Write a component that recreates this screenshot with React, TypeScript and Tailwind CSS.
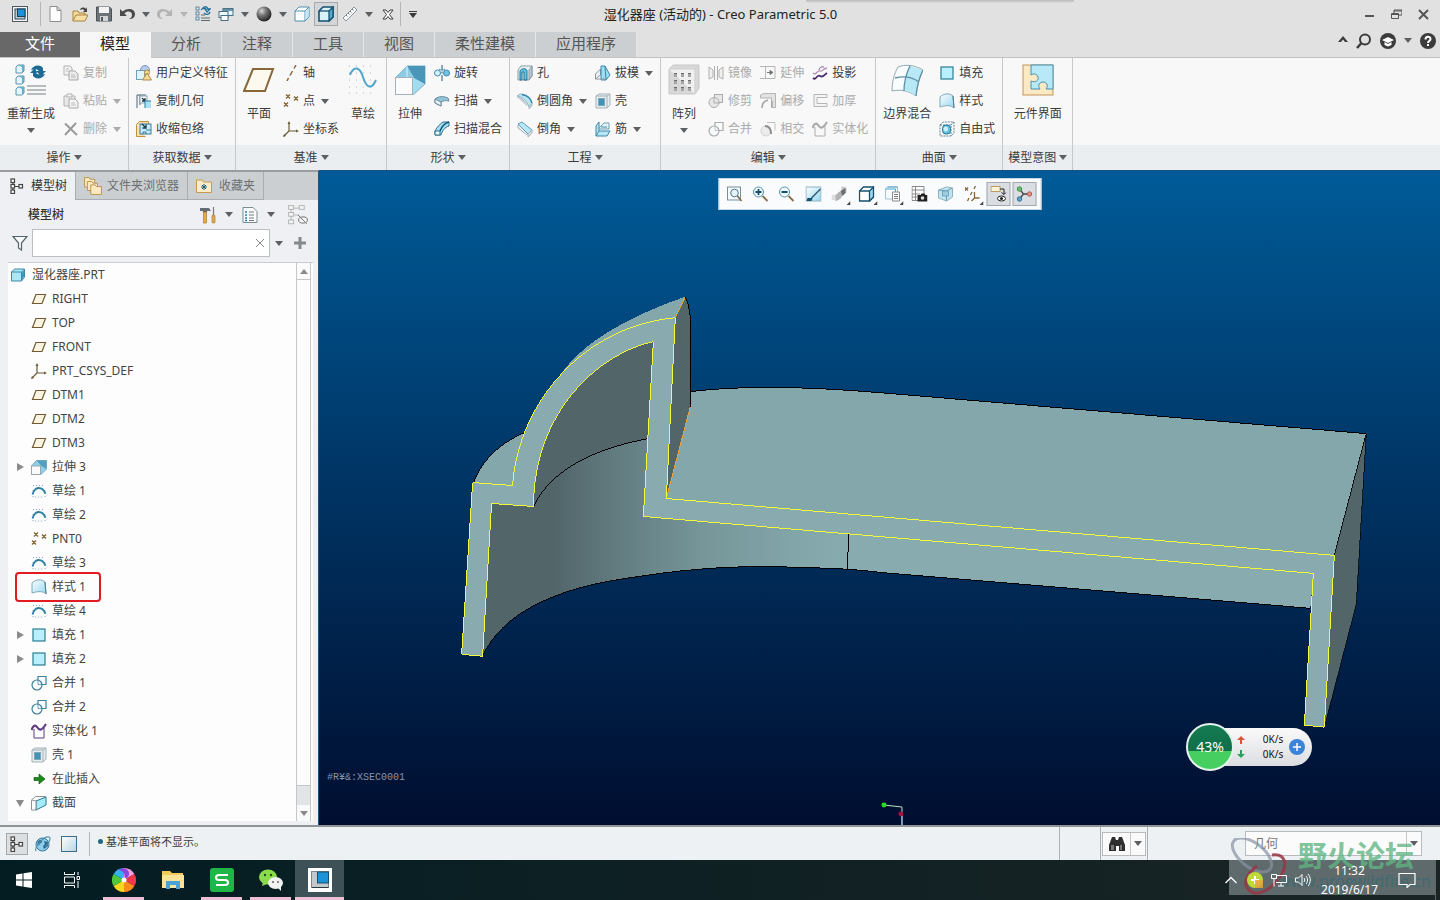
import type { ReactNode } from 'react'

const ICONS: Record<string, ReactNode> = {
  app: (
    <>
      <rect x="0.5" y="0.5" width="15" height="15" fill="#f4f4f4" stroke="#4f5b62" />
      <rect x="3" y="3" width="10" height="10" fill="#c3cace" stroke="#24475c" />
      <rect x="5.5" y="3" width="7.5" height="7.5" fill="#1c93d8" stroke="#173f57" />
    </>
  ),
  new: <path d="M2 0.5h7l4 4v11H2zM9 0.5v4h4" fill="#fdfdfd" stroke="#8d8d8d" />,
  open: (
    <>
      <path d="M1 15V5h5l1 2h6v3" fill="#f3dca4" stroke="#a8833c" />
      <path d="M1 15l3-6h12l-3 6z" fill="#f7e0a6" stroke="#a8833c" />
      <path d="M8 4c1-3 4-3 6-1l1-2v5h-4l1.5-1.5C11 3 10 3 8 4z" fill="#444" />
    </>
  ),
  save: (
    <>
      <path d="M0.5 1h13l2 2v12H0.5z" fill="#6b7278" stroke="#4b5157" />
      <rect x="3" y="1" width="10" height="6" fill="#f3f3f3" />
      <rect x="4" y="10" width="8" height="5" fill="#cfd4d8" />
      <rect x="5" y="11" width="2" height="4" fill="#555" />
    </>
  ),
  undo: <path d="M1 3v7h7L5.500 7.500C8 4.500 13 5 13 9c0 2-1 3-3 4 4 0 6-2 6-5 0-5-7-7-12.500-2.500z" fill="#4a4a4a" />,
  redo: <path d="M15 3v7H8l2.500-2.500C8 4.500 3 5 3 9c0 2 1 3 3 4-4 0-6-2-6-5 0-5 7-7 12.500-2.500z" fill="#b4b4b4" />,
  regenSmall: (
    <>
      <g fill="#d7eff8" stroke="#45718a" strokeWidth="0.8">
        <rect x="1" y="1" width="3" height="3" />
        <rect x="1" y="6" width="3" height="3" />
        <rect x="1" y="11" width="3" height="3" />
      </g>
      <path d="M6 9h4M6 12h9M6 14.5h9" stroke="#5c6a72" />
      <path d="M7 3c2-3 5-3 6 0h2l-3 3-2-3h1c-1-1-2-1-4 0zM15 6c-1 3-4 3-6 1" fill="none" stroke="#1f6f9c" strokeWidth="1.3" />
    </>
  ),
  windows: (
    <>
      <rect x="5" y="2.5" width="10" height="7" fill="#e6f5fb" stroke="#45718a" />
      <path d="M5 4h10" stroke="#45718a" strokeWidth="1.5" />
      <rect x="1" y="5.5" width="9" height="6" fill="#eef9fd" stroke="#45718a" />
      <rect x="3" y="9.5" width="7" height="5" fill="#fff" stroke="#45718a" />
    </>
  ),
  sphere: <circle cx="8" cy="8" r="7.5" fill="url(#ball)" />,
  cube: (
    <>
      <path d="M1 5l4-4h10v10l-4 4H1z" fill="#fff" stroke="#4d8fae" />
      <path d="M1 5h10v10M11 5l4-4" fill="none" stroke="#4d8fae" />
      <path d="M11.5 5.5L14.5 2v9l-3 3z" fill="#c7e8f4" />
    </>
  ),
  cubeBold: (
    <>
      <path d="M1 5l4-4h10v10l-4 4H1z" fill="#d9f2fa" stroke="#14506e" strokeWidth="1.6" />
      <path d="M11 5l4-4v10l-4 4z" fill="#54a9cc" stroke="#14506e" strokeWidth="1.3" />
      <path d="M1 5h10" stroke="#14506e" strokeWidth="1.3" />
    </>
  ),
  cubeOutline: (
    <>
      <path d="M1 5l4-4h10v10l-4 4H1z" fill="#fff" stroke="#14506e" strokeWidth="1.3" />
      <path d="M11 5l4-4v10l-4 4z" fill="#9fd6ea" stroke="#14506e" strokeWidth="1.3" />
      <path d="M1 5h10" stroke="#14506e" strokeWidth="1.3" />
    </>
  ),
  ruler: (
    <>
      <path d="M1 12L12 1l3 3L4 15z" fill="#fafafa" stroke="#8b9499" />
      <path d="M4 9l1.500 1.500M6 7l1.500 1.500M8 5l1.500 1.500M10 3l1.500 1.500" stroke="#5d7d90" />
    </>
  ),
  closeAll: <path d="M3 4h3l2 2.500L10 4h3l-3.500 4.500L13 13h-3l-2-2.500L6 13H3l3.500-4.500z" fill="#fff" stroke="#3b3b3b" />,
  copy: (
    <>
      <path d="M1 1h6l2 2v7H1z" fill="#f2f2f2" stroke="#b3b3b3" />
      <path d="M6 6h6l3 3v6H6z" fill="#eaeaea" stroke="#a9a9a9" />
      <path d="M8 10h4M8 12h5M3 4h3M3 6h2" stroke="#bcbcbc" />
    </>
  ),
  paste: (
    <>
      <path d="M1 3h11v10H1z" fill="#e8e8e8" stroke="#b3b3b3" />
      <path d="M4 1h5v3H4z" fill="#f5f5f5" stroke="#b3b3b3" />
      <path d="M6 6h6l3 3v6H6z" fill="#f4f4f4" stroke="#a9a9a9" />
      <path d="M8 10h4M8 12h5" stroke="#bcbcbc" />
    </>
  ),
  delete: <path d="M2 2.500L14 14M13 2L2 14" stroke="#9a9a9a" strokeWidth="2" />,
  udf: (
    <>
      <circle cx="9" cy="5" r="4.5" fill="#b8c9ea" stroke="#7f93bd" />
      <rect x="0.5" y="5.5" width="8" height="9" fill="#dff3fa" stroke="#6fa0b8" />
      <circle cx="11" cy="7.5" r="2.5" fill="#f6d998" stroke="#b08d45" />
      <path d="M11 8l4.500 7H6.500z" fill="#f6d998" stroke="#b08d45" />
    </>
  ),
  copyGeom: (
    <>
      <path d="M1 15V2h9M4 2v10" fill="none" stroke="#4a6576" />
      <rect x="4" y="3" width="7" height="7" fill="#fff" stroke="#8aa0ac" />
      <path d="M6 5l3 3m0-3v3H6" fill="none" stroke="#1f3d4e" strokeWidth="1.3" />
      <path d="M9 8h6v7H9z" fill="#a9e0f3" />
      <path d="M9 15V8h6" fill="none" stroke="#2a7fa5" />
    </>
  ),
  shrink: (
    <>
      <path d="M0.5 3.500l3-3h9v9M0.5 3.500v12h9" fill="#f9dfae" stroke="#bf9140" />
      <rect x="4" y="3" width="11" height="10" fill="#c6ecf8" stroke="#3d7894" />
      <path d="M6 3l4 4m0-3.500V7H6.500" fill="none" stroke="#143d52" strokeWidth="1.3" />
      <path d="M7 13v-2h3v2M10 9h5" fill="none" stroke="#3d7894" />
    </>
  ),
  plane: <path d="M5 3.500h9.500L11 12.500H1.500z" fill="#fdf5e0" stroke="#6f5a35" strokeWidth="1.2" />,
  axis: <path d="M13 0l-2 3.500M9.500 6L7 10.500M5.500 13L4 16" stroke="#86683a" strokeWidth="1.500" />,
  point: (
    <g stroke="#86683a" strokeWidth="1.4">
      <path d="M3 1.500l4 4m0-4l-4 4M11 3.500l4 4m0-4l-4 4M1 9.500l4 4m0-4l-4 4" />
    </g>
  ),
  csys: (
    <>
      <path d="M6 2v8h8M6 10l-5 5" fill="none" stroke="#6b5a38" strokeWidth="1.2" />
      <path d="M4.500 3l1.500-3 1.500 3zM13 8.500l3 1.500-3 1.500zM0 16l1-3 2 2z" fill="#6b5a38" />
    </>
  ),
  revolve: (
    <>
      <circle cx="3.500" cy="8" r="3" fill="#d5f1fb" stroke="#3d8bb0" />
      <circle cx="12.500" cy="8" r="3" fill="#6fc3e4" stroke="#3d8bb0" />
      <path d="M8 0v5M8 6.500v2M8 10v6" stroke="#1e5a78" />
      <path d="M5 4c2 1.500 4 1.500 6 0" fill="none" stroke="#3d8bb0" />
    </>
  ),
  sweep: (
    <>
      <path d="M1 6c4-3 8-3 13-1l1 3c-4-1-6 0-8 1v4L1 10z" fill="#8fc6dc" stroke="#6d8b98" />
      <path d="M1 6l6 3v4l-6-3z" fill="#e6f3f8" stroke="#6d8b98" />
    </>
  ),
  sweptBlend: (
    <>
      <path d="M1 14V10C3 6 6 3 9 1h6v4c-4 1-7 5-8 9z" fill="#a3dff4" stroke="#2f6f90" />
      <path d="M1 10h5v4H1z" fill="#e7f7fc" stroke="#2f6f90" />
      <path d="M6 10c2-5 5-8 9-9" fill="none" stroke="#14506e" strokeWidth="1.4" />
    </>
  ),
  hole: (
    <>
      <path d="M1 5l3-4h11v10l-3 4H1z" fill="#e8f4f8" stroke="#8c9ba3" />
      <path d="M12 5l3-4v10l-3 4z" fill="#b8cad2" stroke="#8c9ba3" />
      <path d="M3 15V6c1-3 7-3 7 0v9H7V7H5v8z" fill="#5cc6e8" stroke="#2c6f8e" />
    </>
  ),
  round: (
    <>
      <path d="M0 3l3-2c6 0 10 3 12 9l-3 4C10 8 6 4 0 3z" fill="#b9e6f4" stroke="#93b3c0" />
      <path d="M12 14l3-4v3l-3 3zM0 4c5 1 8 4 10 9" fill="#c5ced3" stroke="#b5c0c6" />
      <path d="M5 1.500c5 1 9 4 10 8.500" fill="none" stroke="#2f84a8" strokeWidth="1.3" />
    </>
  ),
  chamfer: (
    <>
      <path d="M1 3l4-2 10 8-4 4z" fill="#b9e6f4" stroke="#5d9ab5" />
      <path d="M11 13l4-4v3l-4 4zM1 4v3l9 7" fill="#dfe7ea" stroke="#a3b1b8" />
    </>
  ),
  draft: (
    <>
      <path d="M0.5 9l5-5v6l-5 4z" fill="#e9eef0" stroke="#8d9aa1" />
      <path d="M6 1h4l5 9-4 5H6z" fill="#9fdcf0" stroke="#3d87a8" />
      <path d="M10 1l1 14" stroke="#3d87a8" />
      <path d="M0.5 14H11" stroke="#8d9aa1" />
    </>
  ),
  shell: (
    <>
      <path d="M1 3l3-2h11v11l-3 3H1z" fill="#e6edf0" stroke="#a3b1b8" />
      <path d="M1 3h11v12M12 3l3-2" fill="none" stroke="#a3b1b8" />
      <rect x="3.5" y="5.5" width="6" height="7" fill="#3f95b8" stroke="#7fa5b6" />
    </>
  ),
  rib: (
    <>
      <path d="M1 5l3-4v9h11l-3 5H1z" fill="#b6e5f4" stroke="#3d87a8" />
      <path d="M4 7l5-5h5v6H4z" fill="#e6f6fb" stroke="#6d9db1" />
      <path d="M4 10l-3 5M6 6h6" stroke="#3d87a8" />
    </>
  ),
  mirror: (
    <g fill="#f0f0f0" stroke="#b0b0b0">
      <path d="M1 2l4 3v7l-4 2zM15 2l-4 3v7l4 2z" />
      <path d="M6.500 1v14M9.500 1v14" />
    </g>
  ),
  trim: (
    <g fill="#e6e6e6" stroke="#adadad">
      <rect x="6.5" y="1.5" width="8" height="8" />
      <circle cx="6" cy="9.5" r="5" />
      <path d="M6 5v5h6" fill="none" />
    </g>
  ),
  merge: (
    <g fill="#f8fcfd" stroke="currentColor" strokeWidth="1.2">
      <path d="M7 5V1.500h8v8h-4" />
      <circle cx="6" cy="10" r="5" />
      <path d="M7 5v4.500h4" fill="none" strokeWidth="0.7" />
    </g>
  ),
  extend: (
    <>
      <path d="M3 1.500h12v12H3M0 1.500h3M0 13.500h3M5.500 1.500v12" fill="none" stroke="#b5b5b5" />
      <path d="M7 7.500h3M10 5.500l3 2-3 2z" fill="#777" stroke="#777" />
    </>
  ),
  offset: (
    <>
      <path d="M0.5 2l3-1.500h12v14h-4V5H0.5z" fill="#e2e2e2" stroke="#b5b5b5" />
      <path d="M2 15c0-4 2-7 6-8M12 14V8" fill="none" stroke="#a5a5a5" strokeWidth="1.5" />
    </>
  ),
  intersect: (
    <>
      <circle cx="6" cy="10" r="5" fill="#ececec" stroke="#d0d0d0" />
      <path d="M7 1.500h8v8" fill="none" stroke="#c2c2c2" />
      <path d="M5 5c4 0 6 3 6 8" fill="none" stroke="#8d8d8d" strokeWidth="2" />
    </>
  ),
  project: (
    <>
      <path d="M1 8c3 3 4-3 7-2s3-3 7-3" fill="none" stroke="#b58cb4" strokeWidth="1.3" />
      <path d="M1 13c3 3 4-4 7-2s4-1 7-3" fill="none" stroke="#4b2b74" strokeWidth="1.8" />
      <path d="M7 5c1-4 3-3 5-3" fill="none" stroke="#74579b" />
    </>
  ),
  thicken: <path d="M15 1.500H2v12h13v-3H5v-6h10z" fill="#f4f4f4" stroke="#b5b5b5" />,
  solidify: (
    <>
      <path d="M3 6v9h10V5" fill="none" stroke="currentColor" />
      <path d="M0.5 7C2 3 4 1 6 4s4 5 9-3" fill="none" stroke="currentColor" strokeWidth="2.2" />
    </>
  ),
  fill: <rect x="2" y="2" width="12" height="12" fill="#b8f0fb" stroke="#2a7d93" strokeWidth="1.2" />,
  style: (
    <>
      <path d="M1 4c4-4 10-4 13-1l1 12c-3-3-8-3-14-1z" fill="url(#sheet)" stroke="#7fa9bb" />
      <path d="M14 3l1 12" stroke="#4a7b90" />
    </>
  ),
  freestyle: (
    <>
      <path d="M1 4l3-3h11v11l-3 3H1zM1 4h11v11M12 4l3-3" fill="none" stroke="#5f8698" strokeDasharray="2 1" />
      <rect x="3.5" y="4" width="8" height="9" rx="3.5" fill="#5cc1e2" stroke="#2b7593" />
      <rect x="4.5" y="5.5" width="4.500" height="5" rx="2" fill="#c9effa" />
    </>
  ),
  part: (
    <>
      <path d="M1.500 5l3-3h10v8l-3 4h-10z" fill="#a9e8fa" stroke="#3d87a8" />
      <path d="M1.500 5h10v9M11.500 5l3-3" fill="none" stroke="#3d87a8" />
      <path d="M12 5.500l2-2v6l-2 3z" fill="#3d99bf" />
    </>
  ),
  extrudeSmall: (
    <>
      <path d="M0.5 7l5-5.500h10v8.500l-5 5z" fill="#8fcfe8" stroke="#7cabc0" />
      <path d="M5.500 1.500h10v8.500l-5-3z" fill="#569fbe" />
      <rect x="0.5" y="7" width="9" height="8.5" fill="#fafafa" stroke="#9aa7ad" />
    </>
  ),
  sketchSmall: (
    <>
      <path d="M2 2.500h12M2 7v7M14 7v7M4 14h8" stroke="#7ea8bd" strokeDasharray="1 2" />
      <path d="M1.500 11.500C4 3 11 3 14.500 10.500" fill="none" stroke="#2a7fa5" strokeWidth="1.8" />
    </>
  ),
  insert: <path d="M3 6.500h5V3l6 5-6 5V9.500H3z" fill="#1c8a1c" stroke="#0f5c0f" strokeWidth="0.7" />,
  section: (
    <>
      <path d="M0.5 5l4-3.500h10V3" fill="none" stroke="#8a9298" />
      <path d="M0.5 5v10h5" fill="none" stroke="#8a9298" />
      <path d="M5 6l10-4v8L5 15z" fill="#a5ecfa" stroke="#2b7593" />
      <path d="M0.5 5L5 6v9" fill="#fff" stroke="#8a9298" />
    </>
  ),
  treeTab: (
    <g fill="#fff" stroke="#444" strokeWidth="1.2">
      <path d="M4 4v9M4 8.500h6" />
      <rect x="2" y="1" width="3.5" height="3.5" />
      <rect x="2" y="6.5" width="3.5" height="3.5" />
      <rect x="2" y="12" width="3.5" height="3.5" />
      <rect x="10" y="6.5" width="3.5" height="3.5" />
    </g>
  ),
  folders: (
    <g fill="#fbe9c2" stroke="#b98f45" strokeWidth="0.8">
      <path d="M0.5 9V0.5h4l1 1.500h4v7z" />
      <path d="M3 12V4h4l1 1.500h4V12z" />
      <path d="M6 15.500V7h4l1 1.500h4.500v7z" />
    </g>
  ),
  favorites: (
    <>
      <path d="M0.5 14.500V2h6l1 2h8v10.500z" fill="#fbecc7" stroke="#c59a51" />
      <path d="M8 6v6M5 9h6M6 7l4 4m0-4l-4 4" stroke="#1c5f88" />
    </>
  ),
  hammer: (
    <>
      <path d="M0 1h9l2 3H7v2H3V4H0z" fill="#666d72" />
      <rect x="3.5" y="5" width="3" height="11" fill="#e3a94c" stroke="#a06d1e" strokeWidth="0.6" />
      <path d="M13.500 0v8" stroke="#777" strokeWidth="1.2" />
      <rect x="12" y="8" width="3" height="8" rx="1" fill="#e3a94c" stroke="#a06d1e" strokeWidth="0.6" />
    </>
  ),
  list: (
    <>
      <path d="M1 0.500h10l4 4v11H1z" fill="#fafcfd" stroke="#7d8b93" />
      <path d="M7 5h5M7 8h5M7 11h5M7 13.500h5" stroke="#555" strokeWidth="0.8" />
      <path d="M3 5h2M3 8h2M3 11h2M3 13.500h2" stroke="#2b7fae" strokeWidth="1.5" />
    </>
  ),
  treeHide: (
    <g fill="#f3f3f3" stroke="#b5b5b5" strokeWidth="0.8">
      <path d="M2.500 2v12M5 2.500h4M5 8h4" />
      <rect x="0.5" y="0.5" width="4" height="3" />
      <rect x="0.5" y="6" width="4" height="3" />
      <rect x="0.5" y="12" width="4" height="3" />
      <rect x="9" y="0.5" width="4" height="3" />
      <ellipse cx="12" cy="12" rx="3.5" ry="2.5" stroke="#777" />
      <path d="M8 8l7 7" stroke="#777" />
    </g>
  ),
  funnel: <path d="M1 1.500h14L9.500 8v7l-3-2V8z" fill="#f7f9fa" stroke="#566269" strokeWidth="1.2" />,
  refit: (
    <>
      <rect x="1" y="1" width="13" height="13" fill="#f7fbfc" stroke="#71919f" />
      <circle cx="8" cy="7" r="3.8" fill="#e5f5fb" stroke="#517587" />
      <path d="M11 10l4 5" stroke="#8b6d45" strokeWidth="1.8" />
    </>
  ),
  zoomIn: (
    <>
      <circle cx="6" cy="6" r="5" fill="#eefaff" stroke="#4f8fae" />
      <path d="M6 3v6M3 6h6" stroke="#14506e" strokeWidth="1.8" />
      <path d="M10 10l5 5" stroke="#8b6d45" strokeWidth="1.8" />
    </>
  ),
  zoomOut: (
    <>
      <circle cx="6" cy="6" r="5" fill="#eefaff" stroke="#4f8fae" />
      <path d="M3 6h6" stroke="#14506e" strokeWidth="1.8" />
      <path d="M10 10l5 5" stroke="#8b6d45" strokeWidth="1.8" />
    </>
  ),
  repaint: (
    <>
      <rect x="0.5" y="1" width="15" height="14" fill="url(#sheet)" stroke="#8fb2c1" />
      <path d="M6 12l9-9" stroke="#31617a" strokeWidth="1.6" />
      <path d="M1 15l1-3h5l-1 3z" fill="#14506e" />
    </>
  ),
  shading: (
    <>
      <path d="M10 0.5l5 1v5l-4 3-1-4z" fill="#c6c6c6" />
      <path d="M2 9c3 0 4-1 5-3l4-1c1 4-1 9-7 10z" fill="#b4b4b4" />
      <path d="M0 9h4v5H0z" fill="#dedede" />
      <path d="M9 5l5-3v5l-3 3z" fill="#6e6e6e" />
    </>
  ),
  savedViews: (
    <>
      <path d="M1 3l2-2h10v10l-2 2H1z" fill="#f6fbfd" stroke="#a5c2cf" />
      <path d="M1 3h10v8M3 1h10" fill="none" stroke="#4ea5cb" />
      <path d="M8 6h7v9H8z" fill="#fff" stroke="#888" />
      <path d="M9.500 8.500h4M9.500 10.500h4M9.500 12.500h4" stroke="#555" strokeWidth="0.8" />
    </>
  ),
  viewManager: (
    <>
      <path d="M0.5 0.5h12v14h-12zM4 0.5v14M0.5 4h12M0.5 8h8M0.5 11h5" fill="#fff" stroke="#888" />
      <path d="M6 9h3l1-1.500h3L14 9h2v6.500H6z" fill="#222" />
      <circle cx="11" cy="12" r="1.8" fill="#ddd" />
    </>
  ),
  perspective: (
    <>
      <path d="M1 4l8-3 6 1v9l-6 4-8-3z" fill="#bfe3ef" stroke="#8fb5c4" />
      <path d="M9 5l6-3M9 5v10M1 4l8 1" stroke="#6e9fb3" fill="none" />
      <rect x="5" y="5" width="6" height="5" fill="#9dcce0" stroke="#5d95ac" strokeWidth="0.7" />
    </>
  ),
  datumDisplay: (
    <g stroke="#86683a" strokeWidth="1.3" fill="none">
      <path d="M0.5 1.500l3 3m0-3l-3 3M11 0L9.500 3M7.500 6L6 9M4.500 12L3 15" />
      <path d="M10 6v6h5M10 12l-3 3" />
    </g>
  ),
  annotation: (
    <>
      <rect x="0.5" y="0.5" width="9" height="5" fill="#fdf3da" stroke="#bb9c5e" />
      <path d="M9.500 3h4v5M11 6.500l2.500 2 2-2" fill="none" stroke="#222" />
      <ellipse cx="11" cy="12.5" rx="4" ry="2.5" fill="#fff" stroke="#222" />
      <circle cx="11" cy="12.5" r="1.5" fill="#222" />
    </>
  ),
  spin: (
    <>
      <path d="M3 3l4 5-4 5M7 8h6" fill="none" stroke="#444" strokeWidth="1.3" />
      <circle cx="3" cy="3" r="2.2" fill="#68c071" stroke="#3f8d48" />
      <circle cx="3" cy="13" r="2.2" fill="#60a5c8" stroke="#2e6f92" />
      <circle cx="13" cy="8" r="2.2" fill="#e38d85" stroke="#b55a51" />
    </>
  ),
  browser: (
    <>
      <circle cx="7.5" cy="8.5" r="6.5" fill="#8fcdea" stroke="#35789c" />
      <path d="M3 5c2-2 5-1 4 1s-3 1-3 4c-1-1-2-3-1-5zM9 5l4 1v4l-4 3-1-3 2-2z" fill="#27678c" />
      <path d="M1 15C-1 11 9 0 14 1c3 1-1 7-4 10" fill="none" stroke="#4f90b1" strokeWidth="1.2" />
    </>
  ),
  square: <rect x="0.5" y="0.5" width="15" height="15" fill="url(#pane)" stroke="#3d6d88" />,
  binoculars: (
    <g fill="#2e2e2e">
      <path d="M3 1h3l1 3h2l1-3h3l3 8v6h-6v-5H7v5H0V9z" />
      <path d="M2 9h3v5H2zM11 9h2v5h-2z" fill="#777" />
    </g>
  ),
  // 32px ribbon icons
  regen: (
    <>
      <g fill="#e4f6fc" stroke="#3f7894" strokeWidth="0.8">
        <path d="M1 3l2-2h6v6L7 9H1zM1 14l2-2h6v6l-2 2H1zM1 25l2-2h6v6l-2 2H1z" />
      </g>
      <path d="M3 1h6v6L7 9V3zM3 12h6v6l-2 2v-6zM3 23h6v6l-2 2v-6z" fill="#5fb1d2" />
      <path d="M12 22h19M12 26h19M12 30h19" stroke="#a1a8ac" strokeWidth="1.6" />
      <path d="M16 6c2-5 9-6 12-2v3h3l-5 5-5-5h3c-2-2-4-2-8-1zM30 10c-2 5-9 6-12 2V9h-3l5-5 2 5h-1c2 2 5 2 9 1z" fill="#1d6a94" />
    </>
  ),
  planeBig: <path d="M10 5h20l-8 22H1z" fill="#fdf9ef" stroke="#86683a" strokeWidth="2" />,
  sketch: (
    <>
      <path d="M2 2h28M2 9h28M2 16h28M2 23h28M2 29h28" stroke="#a8b6bd" strokeDasharray="1 6" />
      <path d="M3 11C7 1 13 3 16 13s8 14 13 3" fill="none" stroke="#4fa6cc" strokeWidth="2" />
    </>
  ),
  extrude: (
    <>
      <path d="M1 14L13 2h18v18L19 31z" fill="#a4dcef" stroke="#7fb2c7" />
      <path d="M13 2h18v18L20 14z" fill="#4a96b8" />
      <path d="M13 2L1 14h19l-7-12" fill="#8ccbe3" />
      <path d="M13 2v11" stroke="#d8f1f9" />
      <rect x="1.5" y="13.5" width="17" height="17" fill="#fbfbfb" stroke="#a6b2b8" />
    </>
  ),
  pattern: (
    <>
      <path d="M1 5l4-4h26v23l-4 6H1z" fill="#d8d8d8" stroke="#c8c8c8" />
      <path d="M1 5h26v25M27 5l4-4" fill="#f0f0f0" stroke="#cfcfcf" />
      <path d="M6 9h3v4H6zM13 9h3v4h-3zM20 9h3v4h-3zM6 16h3v4H6zM13 16h3v4h-3zM20 16h3v4h-3zM6 23h3v4H6zM13 23h3v4h-3zM20 23h3v4h-3z" fill="#a5a5a5" />
      <path d="M6 9h3v1H6zM13 9h3v1h-3zM20 9h3v1h-3zM6 16h3v1H6zM13 16h3v1h-3zM20 16h3v1h-3zM6 23h3v1H6zM13 23h3v1h-3zM20 23h3v1h-3z" fill="#6b6b6b" />
    </>
  ),
  boundary: (
    <>
      <path d="M7 3C14 0 24 1 32 6c-4 8-6 16-7 26-7-5-15-7-24-5C1 18 3 10 7 3z" fill="#fafdfe" stroke="#8fa7b2" />
      <path d="M19 2l13 4c-4 8-6 16-7 26-4-3-8-5-12-5 0-9 2-17 6-25z" fill="#b8e7f5" />
      <path d="M19 2c-4 8-6 16-6 25M4 14c8-2 17-1 24 4M32 6c-4 8-6 16-7 26" fill="none" stroke="#5b8ea4" strokeWidth="1.3" />
    </>
  ),
  component: (
    <>
      <rect x="1" y="1" width="30" height="30" fill="#fde9c4" stroke="#c3935a" />
      <path d="M9 1h22v24h-7c3-4 0-7-3-7s-6 3-3 7H9v-8c5 2 8-1 7-4s-4-4-7-2z" fill="#b7e9f8" stroke="#4490ae" />
    </>
  ),
}

function Icon({ name, className = 'size-4', box = 16 }: { name: string; className?: string; box?: number }) {
  return (
    <svg viewBox={`0 0 ${box} ${box}`} className={`shrink-0 ${className}`} aria-hidden="true">
      {ICONS[name]}
    </svg>
  )
}

function Caret({ className = 'text-[#5c6063]' }: { className?: string }) {
  return (
    <svg viewBox="0 0 8 5" className={`h-[5px] w-2 shrink-0 ${className}`} aria-hidden="true">
      <path d="M0 0h8L4 5z" fill="currentColor" />
    </svg>
  )
}

type Tool = { icon: string; label: string; menu?: boolean; disabled?: boolean }

type Part = Tool[] | { big: string; label: string; menu?: boolean }

const RIBBON: { title: string; parts: Part[] }[] = [
  {
    title: '操作',
    parts: [
      { big: 'regen', label: '重新生成', menu: true },
      [
        { icon: 'copy', label: '复制', disabled: true },
        { icon: 'paste', label: '粘贴', menu: true, disabled: true },
        { icon: 'delete', label: '删除', menu: true, disabled: true },
      ],
    ],
  },
  {
    title: '获取数据',
    parts: [
      [
        { icon: 'udf', label: '用户定义特征' },
        { icon: 'copyGeom', label: '复制几何' },
        { icon: 'shrink', label: '收缩包络' },
      ],
    ],
  },
  {
    title: '基准',
    parts: [
      { big: 'planeBig', label: '平面' },
      [
        { icon: 'axis', label: '轴' },
        { icon: 'point', label: '点', menu: true },
        { icon: 'csys', label: '坐标系' },
      ],
      { big: 'sketch', label: '草绘' },
    ],
  },
  {
    title: '形状',
    parts: [
      { big: 'extrude', label: '拉伸' },
      [
        { icon: 'revolve', label: '旋转' },
        { icon: 'sweep', label: '扫描', menu: true },
        { icon: 'sweptBlend', label: '扫描混合' },
      ],
    ],
  },
  {
    title: '工程',
    parts: [
      [
        { icon: 'hole', label: '孔' },
        { icon: 'round', label: '倒圆角', menu: true },
        { icon: 'chamfer', label: '倒角', menu: true },
      ],
      [
        { icon: 'draft', label: '拔模', menu: true },
        { icon: 'shell', label: '壳' },
        { icon: 'rib', label: '筋', menu: true },
      ],
    ],
  },
  {
    title: '编辑',
    parts: [
      { big: 'pattern', label: '阵列', menu: true },
      [
        { icon: 'mirror', label: '镜像', disabled: true },
        { icon: 'trim', label: '修剪', disabled: true },
        { icon: 'merge', label: '合并', disabled: true },
      ],
      [
        { icon: 'extend', label: '延伸', disabled: true },
        { icon: 'offset', label: '偏移', disabled: true },
        { icon: 'intersect', label: '相交', disabled: true },
      ],
      [
        { icon: 'project', label: '投影' },
        { icon: 'thicken', label: '加厚', disabled: true },
        { icon: 'solidify', label: '实体化', disabled: true },
      ],
    ],
  },
  {
    title: '曲面',
    parts: [
      { big: 'boundary', label: '边界混合' },
      [
        { icon: 'fill', label: '填充' },
        { icon: 'style', label: '样式' },
        { icon: 'freestyle', label: '自由式' },
      ],
    ],
  },
  { title: '模型意图', parts: [{ big: 'component', label: '元件界面' }] },
]

const TABS = ['模型', '分析', '注释', '工具', '视图', '柔性建模', '应用程序']

type TreeNode = { icon: string; label: string; state?: 'open' | 'closed'; marked?: boolean }

const TREE: TreeNode[] = [
  { icon: 'plane', label: 'RIGHT' },
  { icon: 'plane', label: 'TOP' },
  { icon: 'plane', label: 'FRONT' },
  { icon: 'csys', label: 'PRT_CSYS_DEF' },
  { icon: 'plane', label: 'DTM1' },
  { icon: 'plane', label: 'DTM2' },
  { icon: 'plane', label: 'DTM3' },
  { icon: 'extrudeSmall', label: '拉伸 3', state: 'closed' },
  { icon: 'sketchSmall', label: '草绘 1' },
  { icon: 'sketchSmall', label: '草绘 2' },
  { icon: 'point', label: 'PNT0' },
  { icon: 'sketchSmall', label: '草绘 3' },
  { icon: 'style', label: '样式 1', marked: true },
  { icon: 'sketchSmall', label: '草绘 4' },
  { icon: 'fill', label: '填充 1', state: 'closed' },
  { icon: 'fill', label: '填充 2', state: 'closed' },
  { icon: 'merge', label: '合并 1' },
  { icon: 'merge', label: '合并 2' },
  { icon: 'solidify', label: '实体化 1' },
  { icon: 'shell', label: '壳 1' },
  { icon: 'insert', label: '在此插入' },
  { icon: 'section', label: '截面', state: 'open' },
]

const VIEW_TOOLS: { icon: string; label: string; menu?: boolean; active?: boolean }[] = [
  { icon: 'refit', label: '重新调整' },
  { icon: 'zoomIn', label: '放大' },
  { icon: 'zoomOut', label: '缩小' },
  { icon: 'repaint', label: '重画' },
  { icon: 'shading', label: '渲染选项', menu: true },
  { icon: 'cubeOutline', label: '显示样式', menu: true },
  { icon: 'savedViews', label: '已保存方向', menu: true },
  { icon: 'viewManager', label: '视图管理器' },
  { icon: 'perspective', label: '透视图' },
  { icon: 'datumDisplay', label: '基准显示过滤器', menu: true },
  { icon: 'annotation', label: '注释显示', active: true },
  { icon: 'spin', label: '旋转中心', active: true },
]

function QuickButton({ name, label }: { name: string; label: string }) {
  return (
    <button type="button" aria-label={label} className="flex">
      <Icon name={name} />
    </button>
  )
}

function MenuCaret({ label, className }: { label: string; className?: string }) {
  return (
    <button type="button" aria-label={label} className="flex py-1">
      <Caret className={className} />
    </button>
  )
}

function TitleBar() {
  return (
    <header className="relative flex h-8 shrink-0 items-center bg-[#e1e1e1]">
      <div className="absolute top-0 left-[806px] h-[3px] w-[268px] rounded-b bg-gradient-to-b from-[#bcbcbc] to-[#dcdcdc]" />
      <div className="flex flex-1 items-center pb-1 pl-3">
        <Icon name="app" />
        <span className="mr-[7px] ml-3 h-6 w-px bg-[#b5b5b5]" />
        <div className="flex items-center gap-2">
          <QuickButton name="new" label="新建" />
          <QuickButton name="open" label="打开" />
          <QuickButton name="save" label="保存" />
        </div>
        <div className="ml-[7px] flex items-center gap-[7px]">
          <QuickButton name="undo" label="撤消" />
          <MenuCaret label="撤消列表" />
          <QuickButton name="redo" label="重做" />
          <MenuCaret label="重做列表" className="text-[#b4b4b4]" />
          <QuickButton name="regenSmall" label="重新生成" />
          <QuickButton name="windows" label="窗口" />
          <MenuCaret label="窗口列表" />
          <QuickButton name="sphere" label="外观" />
          <MenuCaret label="外观列表" />
          <QuickButton name="cube" label="消隐" />
          <button
            type="button"
            aria-label="着色"
            className="-mx-[3px] flex size-6 items-center justify-center border border-[#a9a9a9] bg-[#d3d6d8]"
          >
            <Icon name="cubeBold" />
          </button>
          <QuickButton name="ruler" label="测量" />
          <MenuCaret label="测量列表" />
          <QuickButton name="closeAll" label="关闭" />
        </div>
        <span className="mr-2 ml-1 h-6 w-px bg-[#b5b5b5]" />
        <button type="button" aria-label="自定义快速访问工具栏" className="flex flex-col items-center gap-px">
          <span className="h-px w-2 bg-[#3c3c3c]" />
          <Caret className="text-[#3c3c3c]" />
        </button>
      </div>
      <h1 className="pb-[3px] text-[13px] text-[#222]">湿化器座 (活动的) - Creo Parametric 5.0</h1>
      <div className="flex flex-1 items-center justify-end gap-4 pr-[11px] pb-1 text-[#555]">
        <button type="button" aria-label="最小化">
          <svg viewBox="0 0 11 11" className="size-[11px]">
            <path d="M1 7h9" stroke="currentColor" strokeWidth="2" />
          </svg>
        </button>
        <button type="button" aria-label="还原">
          <svg viewBox="0 0 11 11" className="size-[11px]">
            <path d="M3 4V1h8v5H8M3 2h8M0.5 4.500h7v5h-7zM0.5 5.500h7" fill="none" stroke="currentColor" />
          </svg>
        </button>
        <button type="button" aria-label="关闭窗口">
          <svg viewBox="0 0 11 11" className="size-[11px]">
            <path d="M1 1l9 9M10 1l-9 9" stroke="currentColor" strokeWidth="2" />
          </svg>
        </button>
      </div>
    </header>
  )
}

function TabRow() {
  return (
    <nav className="flex h-[26px] shrink-0 items-stretch border-b border-[#c4c4c4] bg-[#e1e1e1] text-[15px]">
      <button type="button" className="bg-[#686868] px-[25px] pb-[3px] text-white">
        文件
      </button>
      {TABS.map((tab, i) => (
        <button
          key={tab}
          type="button"
          className={`border-r px-5 pb-[3px] ${
            i === 0 ? '-mb-px border-[#f7f7f7] bg-[#f7f7f7] text-[#222]' : 'border-[#e4e7e9] bg-[#cbcfd2] text-[#555]'
          }`}
        >
          {tab}
        </button>
      ))}
      <div className="flex flex-1 items-center justify-end gap-2 pr-1 pb-2 text-[#3c3c3c]">
        <button type="button" aria-label="最小化功能区" className="flex pb-1">
          <svg viewBox="0 0 10 6" className="h-[6px] w-[10px]">
            <path d="M0 6l5-6 5 6H7L5 3.500 3 6z" fill="currentColor" />
          </svg>
        </button>
        <button type="button" aria-label="搜索">
          <svg viewBox="0 0 16 16" className="size-4">
            <circle cx="9" cy="6.5" r="5" fill="none" stroke="currentColor" strokeWidth="2" />
            <path d="M5.500 10L1 15" stroke="currentColor" strokeWidth="2.5" />
          </svg>
        </button>
        <button type="button" aria-label="学习">
          <svg viewBox="0 0 16 16" className="size-4">
            <circle cx="8" cy="8" r="8" fill="currentColor" />
            <path d="M2 7l6-3 6 3-6 3zM4.500 9l3.500 2 3.500-2v3l-3.500 1.500L4.500 12z" fill="#fff" />
          </svg>
        </button>
        <MenuCaret label="学习列表" />
        <button type="button" aria-label="帮助">
          <svg viewBox="0 0 16 16" className="size-4">
            <circle cx="8" cy="8" r="8" fill="currentColor" />
            <path d="M5.500 6.500C5.500 3 10.500 3 10.500 6c0 2-2.500 2-2.500 4" fill="none" stroke="#fff" strokeWidth="2" />
            <rect x="7" y="11" width="2" height="2" fill="#fff" />
          </svg>
        </button>
      </div>
    </nav>
  )
}

function Ribbon() {
  return (
    <section aria-label="功能区" className="flex h-28 shrink-0 bg-[#f8f8f8] text-xs text-[#3c3c3c]">
      {RIBBON.map((group) => (
        <div key={group.title} className="flex flex-col border-r border-[#c6c9cb]">
          <div className="flex flex-1 justify-center gap-2 px-[7px] pt-px">
            {group.parts.map((part, i) =>
              Array.isArray(part) ? (
                <div key={i} className="flex flex-col">
                  {part.map((tool) => (
                    <button
                      key={tool.label}
                      type="button"
                      disabled={tool.disabled}
                      className={`flex h-7 items-center gap-1 whitespace-nowrap ${tool.disabled ? 'text-[#ababab]' : ''}`}
                    >
                      <Icon name={tool.icon} />
                      <span className={tool.menu ? 'mr-[2px]' : ''}>{tool.label}</span>
                      {tool.menu && <Caret className={tool.disabled ? 'text-[#ababab]' : undefined} />}
                    </button>
                  ))}
                </div>
              ) : (
                <button key={part.label} type="button" className="flex min-w-8 flex-col items-center pt-[5px] whitespace-nowrap">
                  <Icon name={part.big} className="size-8" box={32} />
                  <span className="mt-2.5 leading-4">{part.label}</span>
                  {part.menu && (
                    <span className="mt-1.5">
                      <Caret />
                    </span>
                  )}
                </button>
              ),
            )}
          </div>
          <button
            type="button"
            className="flex h-[25px] items-center justify-center gap-[3px] bg-[#ebeef1] px-[5px] whitespace-nowrap"
          >
            {group.title}
            <Caret />
          </button>
        </div>
      ))}
      <div className="flex flex-1 flex-col justify-end">
        <div className="h-[25px] bg-[#ebeef1]" />
      </div>
    </section>
  )
}

function iconTint(name: string) {
  if (name === 'solidify') return 'size-4 text-[#5d3b85]'
  if (name === 'merge') return 'size-4 text-[#3a7f9b]'
  return 'size-4'
}

function ModelTree() {
  return (
    <aside className="flex w-[319px] shrink-0 flex-col border-t-2 border-r border-t-[#9a9c9e] border-r-[#23527d] bg-[#eef0f3] text-xs text-[#444]">
      <div className="flex h-7 shrink-0 bg-[#cbcfd2]">
        <button type="button" className="flex items-center gap-1.5 bg-[#eef0f3] pr-2 pl-[9px] text-[#333]">
          <Icon name="treeTab" />
          模型树
        </button>
        <button type="button" className="flex items-center gap-[5px] border border-t-0 border-[#a9adb0] px-2 text-[#6b6f72]">
          <Icon name="folders" className="size-[18px]" />
          文件夹浏览器
        </button>
        <button type="button" className="flex items-center gap-[7px] border-r border-b border-[#a9adb0] px-2 text-[#6b6f72]">
          <Icon name="favorites" />
          收藏夹
        </button>
      </div>
      <div className="flex h-[29px] shrink-0 items-center pr-2.5 pl-7">
        <h2 className="flex-1 font-medium text-[#333]">模型树</h2>
        <div className="flex items-center gap-[9px]">
          <button type="button" aria-label="设置" className="flex">
            <Icon name="hammer" className="h-[18px] w-4" />
          </button>
          <MenuCaret label="设置列表" />
          <button type="button" aria-label="显示" className="flex">
            <Icon name="list" className="h-[18px] w-4" />
          </button>
          <MenuCaret label="显示列表" />
          <button type="button" aria-label="隐藏树" className="ml-1 flex">
            <Icon name="treeHide" className="size-5" />
          </button>
        </div>
      </div>
      <div className="flex shrink-0 items-center px-3">
        <Icon name="funnel" />
        <div className="ml-1 flex h-7 flex-1 items-center border border-[#bcc0c3] bg-white pr-1">
          <input type="text" aria-label="过滤模型树" className="h-full w-full min-w-0 flex-1 px-1 outline-none" />
          <button type="button" aria-label="清除" className="flex text-[#888]">
            <svg viewBox="0 0 10 10" className="size-[10px]">
              <path d="M1 1l8 8M9 1L1 9" stroke="currentColor" />
            </svg>
          </button>
        </div>
        <span className="mx-[5px] flex">
          <MenuCaret label="过滤列表" />
        </span>
        <button type="button" aria-label="添加" className="ml-1.5 flex text-[#858a8d]">
          <svg viewBox="0 0 12 12" className="size-3">
            <path d="M6 0v12M0 6h12" stroke="currentColor" strokeWidth="3" />
          </svg>
        </button>
      </div>
      <div className="mt-[5px] mr-[5px] mb-1 ml-2 flex min-h-0 flex-1 border-t border-[#c9cccf] bg-[#fdfdfd]">
        <div className="min-w-0 flex-1 overflow-hidden">
          <div className="flex h-6 items-center gap-1.5 pl-[2px]">
            <Icon name="part" />
            湿化器座.PRT
          </div>
          <ul>
            {TREE.map((node) => (
              <li key={node.label} className="relative flex h-6 items-center pl-2">
                <span className="flex w-[15px] text-[#8a8a8a]">
                  {node.state && (
                    <svg viewBox="0 0 8 8" className="size-2">
                      <path d={node.state === 'open' ? 'M0 1h8L4 8z' : 'M1 0l7 4-7 4z'} fill="currentColor" />
                    </svg>
                  )}
                </span>
                <Icon name={node.icon} className={iconTint(node.icon)} />
                <span className="ml-[5px]">{node.label}</span>
                {node.marked && (
                  <span className="absolute -inset-y-[3px] left-[7px] w-[86px] rounded border-2 border-[#e21b23]" />
                )}
              </li>
            ))}
          </ul>
        </div>
        <div className="mr-0.5 flex w-[15px] flex-col border-x border-[#c4c7ca] bg-[#e3e4e5]">
          <button type="button" aria-label="向上滚动" className="flex h-4 items-center justify-center bg-[#fafafa] text-[#8a8a8a]">
            <Caret className="rotate-180" />
          </button>
          <div className="flex-1 border-y border-[#c4c7ca] bg-[#fcfcfc]" />
          <div className="h-[19px]" />
          <button type="button" aria-label="向下滚动" className="flex h-4 items-center justify-center bg-[#fafafa] text-[#8a8a8a]">
            <Caret className="" />
          </button>
        </div>
      </div>
    </aside>
  )
}

function ModelDrawing() {
  return (
    <svg viewBox="319 170 1121 655" className="absolute inset-0 size-full" role="img" aria-label="湿化器座截面">
      <defs>
        <linearGradient id="wall" gradientUnits="userSpaceOnUse" x1="482" y1="0" x2="850" y2="0">
          <stop offset="0" stopColor="#52666a" />
          <stop offset="0.2" stopColor="#52666a" />
          <stop offset="0.4" stopColor="#658084" />
          <stop offset="0.6" stopColor="#769699" />
          <stop offset="0.85" stopColor="#82a5a9" />
          <stop offset="1" stopColor="#88abaf" />
        </linearGradient>
        <radialGradient id="ball" cx="0.35" cy="0.3" r="0.75">
          <stop offset="0" stopColor="#d9d9d9" />
          <stop offset="0.4" stopColor="#777" />
          <stop offset="1" stopColor="#1c1c1c" />
        </radialGradient>
        <linearGradient id="sheet" x1="0" y1="0" x2="1" y2="1">
          <stop offset="0" stopColor="#fbfeff" />
          <stop offset="1" stopColor="#97d8ee" />
        </linearGradient>
        <linearGradient id="pane" x1="0" y1="0" x2="1" y2="1">
          <stop offset="0" stopColor="#ffffff" />
          <stop offset="1" stopColor="#b9d3e0" />
        </linearGradient>
      </defs>

      <g shapeRendering="crispEdges">
        {/* outer skin behind the section plane */}
        <path d="M473 482C480 462 498 443 524 432L540 470 512 486z" fill="#84a7ab" />
        <path d="M473 482C480 462 498 443 524 432" fill="none" stroke="#000" />
        <path d="M553 384C573 352 600 333 640 314Q664 303 685 296L675 318 600 345z" fill="#84a7ab" />
        <path d="M690 391Q760 382 880 392L1367 433 1335 555 666 498z" fill="#84a7ab" />
        <path d="M690 391Q760 382 880 392L1367 433 1335 555" fill="none" stroke="#000" />
        <path d="M1367 433L1357 604 1325 727 1335 555z" fill="#52666a" stroke="#000" strokeWidth="0.7" />
        <path d="M685 296Q692 310 690 340V406L666 498 675 317z" fill="#52666a" />
        <path d="M685 296Q692 310 690 340V406" fill="none" stroke="#000" />
        <path d="M675 317L685 296M690 406L666 498" stroke="#e8a13c" />

        {/* inside of the shell */}
        <path d="M653 341C600 352 533 410 533 506L648 506z" fill="#52666a" />
        <path
          d="M491 503L533 506C552 466 600 447 648 438L643 516 1314 573 1311 608 880 572C847 568 830 568 800 567 730 564 680 569 613 580 550 591 500 615 482 656z"
          fill="url(#wall)"
        />
        <path d="M533 506C552 466 600 447 648 438" fill="none" stroke="#000" />
        <path
          d="M1311 608L880 572C847 568 830 568 800 567 730 564 680 569 613 580 550 591 500 615 482 656"
          fill="none"
          stroke="#000"
        />
        <path d="M849 533L847 569" stroke="#000" />

        {/* cut face */}
        <path
          d="M472 482L512 485C518 400 585 325 675 317L666 498 1335 555 1325 727 1305 725 1314 573 643 516 653 341C600 352 533 410 533 506L491 503 482 656 461 654z"
          fill="#89abb0"
          stroke="#f2f93a"
        />
      </g>

      {/* orientation triad */}
      <path d="M884 805L902 807V825" fill="none" stroke="#b9e6c0" />
      <path d="M902 812v13" stroke="#9cc4ef" />
      <circle cx="884" cy="805" r="2.5" fill="#22e022" />
      <circle cx="901" cy="814" r="2.5" fill="#a3123c" />
    </svg>
  )
}

function SpeedMeter() {
  return (
    <div className="absolute right-32 bottom-[54px] flex items-center">
      <div className="z-10 flex size-12 items-center justify-center rounded-full border-2 border-[#e3f3ea] bg-gradient-to-b from-[#157a52] from-0% via-[#0f6f48] via-58% to-[#46cf60] to-58% text-sm text-white">
        43%
      </div>
      <div className="-ml-6 flex h-[38px] w-[102px] items-center justify-between rounded-r-full bg-gradient-to-b from-[#fafafa] to-[#dcdde2] pr-[7px] pl-[27px] text-[10px] leading-[15px] text-[#111]">
        <div className="flex flex-col gap-1.5">
          <svg viewBox="0 0 8 8" className="size-2">
            <path d="M4 0l4 4H5v4H3V4H0z" fill="#e2513c" />
          </svg>
          <svg viewBox="0 0 8 8" className="size-2">
            <path d="M4 8l4-4H5V0H3v4H0z" fill="#2f9e58" />
          </svg>
        </div>
        <div className="flex flex-col pl-3">
          <span>0K/s</span>
          <span>0K/s</span>
        </div>
        <button type="button" aria-label="加速" className="flex">
          <svg viewBox="0 0 16 16" className="size-4">
            <circle cx="8" cy="8" r="8" fill="#3b84dc" />
            <path d="M8 4v8M4 8h8" stroke="#fff" strokeWidth="1.5" />
          </svg>
        </button>
      </div>
    </div>
  )
}

function Viewport() {
  return (
    <main className="relative min-w-0 flex-1 overflow-hidden border-t border-[#1c4f7e] bg-gradient-to-b from-[#005b98] to-[#000e30]">
      <ModelDrawing />
      <div className="absolute top-[7px] left-1/2 flex h-8 w-[323px] -translate-x-1/2 items-center justify-between border border-[#c5d6e4] bg-[#fafbfc] px-[3px]">
        {VIEW_TOOLS.map((tool) => (
          <button
            key={tool.icon}
            type="button"
            aria-label={tool.label}
            className={`relative flex size-6 items-center justify-center border ${
              tool.active ? 'border-[#a4aab0] bg-[#dadde2]' : 'border-transparent'
            }`}
          >
            <Icon name={tool.icon} />
            {tool.menu && (
              <svg viewBox="0 0 4 4" className="absolute right-0 bottom-0 size-1">
                <path d="M4 0v4H0z" fill="#444" />
              </svg>
            )}
          </button>
        ))}
      </div>
      <p className="absolute bottom-10 left-2 font-['Liberation_Mono',monospace] text-[10px] leading-[14px] text-[#8a93a5]">
        #R¥&amp;:XSEC0001
      </p>
      <SpeedMeter />
    </main>
  )
}

function StatusBar() {
  return (
    <footer className="flex h-[35px] shrink-0 items-center border-t-2 border-[#8f9296] bg-[#eef1f4] pl-1.5 text-[11px] text-[#3c3c3c]">
      <button type="button" aria-label="导航器" className="flex size-[22px] items-center justify-center border border-[#a4a8ab] bg-[#dcdfe1]">
        <Icon name="treeTab" />
      </button>
      <button type="button" aria-label="浏览器" className="ml-[7px] flex">
        <Icon name="browser" />
      </button>
      <button type="button" aria-label="全屏" className="ml-2.5 flex">
        <Icon name="square" />
      </button>
      <span className="mr-2 ml-3 h-6 w-px bg-[#b4b7ba]" />
      <span className="mb-1 size-[5px] rounded-full bg-[#1f6a80]" />
      <p className="mb-0.5 ml-[3px] flex-1">基准平面将不显示。</p>
      <div className="flex h-full border-x border-[#aeb1b4] pl-10" />
      <div className="flex h-full items-center border-r border-[#aeb1b4] px-px">
        <div className="flex h-6 border border-[#b9bcbf] bg-[#fafafa]">
          <button type="button" aria-label="查找" className="flex w-[27px] items-center justify-center">
            <Icon name="binoculars" />
          </button>
          <button type="button" aria-label="查找选项" className="flex w-[15px] items-center justify-center border-l border-[#c4c7ca]">
            <Caret />
          </button>
        </div>
      </div>
      <div className="relative mr-[18px] ml-[97px] text-xs text-[#777]">
        <select aria-label="选择过滤器" className="h-[25px] w-[177px] appearance-none border border-[#b9bcbf] bg-[#fbfbfb] pl-2">
          <option>几何</option>
        </select>
        <span className="pointer-events-none absolute inset-y-px right-px flex w-[15px] items-center justify-center border-l border-[#c4c7ca]">
          <Caret />
        </span>
      </div>
    </footer>
  )
}

const TASKS: { label: string; running?: boolean; active?: boolean; art: ReactNode }[] = [
  {
    label: '360浏览器',
    running: true,
    art: (
      <>
        <path d="M12 12L12 0A12 12 0 0 1 22.400 6z" fill="#f3a0e0" />
        <path d="M12 12L22.400 6A12 12 0 0 1 22.400 18z" fill="#f4364c" />
        <path d="M12 12L22.400 18A12 12 0 0 1 12 24z" fill="#fb8c1c" />
        <path d="M12 12L12 24A12 12 0 0 1 1.600 18z" fill="#f6d91f" />
        <path d="M12 12L1.600 18A12 12 0 0 1 1.600 6z" fill="#4fc73a" />
        <path d="M12 12L1.600 6A12 12 0 0 1 12 0z" fill="#2fb2ee" />
        <path d="M6 2C12-2 20 2 16 9L12 12C14 7 12 3 6 2z" fill="#8e45e0" />
        <circle cx="12" cy="12" r="2.5" fill="#fff" />
      </>
    ),
  },
  {
    label: '文件资源管理器',
    art: (
      <>
        <path d="M1 20V3h8l2 2h11v15z" fill="#f2c95c" />
        <path d="M1 7h22v13H1z" fill="#fbe39a" />
        <path d="M5 21v-8h14v8h-4v-4H9v4z" fill="#4aa3d8" />
      </>
    ),
  },
  {
    label: 'WPS',
    running: true,
    art: (
      <>
        <rect width="24" height="24" rx="3" fill="#1fb648" />
        <path d="M18 7H9c-4 0-4 5 0 5h6c4 0 4 5 0 5H6" fill="none" stroke="#fff" strokeWidth="2" />
      </>
    ),
  },
  {
    label: '微信',
    running: true,
    art: (
      <>
        <ellipse cx="9" cy="9" rx="9" ry="7.5" fill="#8bdc4c" />
        <path d="M4 14l-1 4 5-2z" fill="#8bdc4c" />
        <circle cx="6" cy="7" r="1.2" fill="#2b4a1b" />
        <circle cx="12" cy="7" r="1.2" fill="#2b4a1b" />
        <ellipse cx="16.5" cy="15" rx="7.5" ry="6" fill="#f2f2f2" />
        <path d="M19 20l3 3v-5z" fill="#f2f2f2" />
        <circle cx="14" cy="14" r="1" fill="#666" />
        <circle cx="19" cy="14" r="1" fill="#666" />
      </>
    ),
  },
  {
    label: 'Creo Parametric',
    running: true,
    active: true,
    art: (
      <>
        <rect width="24" height="24" fill="#fff" />
        <rect x="3.5" y="3.5" width="17" height="16" fill="#c3c8cb" stroke="#7d868c" />
        <rect x="9.5" y="4" width="11" height="11" fill="#1c93d8" stroke="#14506e" />
        <path d="M4 19.500h16.500" stroke="#2a3b45" />
      </>
    ),
  },
]

function Taskbar() {
  return (
    <div className="relative flex h-10 shrink-0 bg-gradient-to-r from-[#031d23] to-[#1a2424] text-white">
      <button type="button" aria-label="开始" className="flex w-12 items-center justify-center">
        <svg viewBox="0 0 16 16" className="size-4">
          <path d="M0 2.500l6.500-1v6H0zM7.500 1.300L16 0v7.500H7.500zM0 8.500h6.500v6L0 13.500zM7.500 8.500H16V16l-8.500-1.200z" fill="#fff" />
        </svg>
      </button>
      <button type="button" aria-label="任务视图" className="mr-[3px] flex w-12 items-center justify-center">
        <svg viewBox="0 0 16 16" className="size-4">
          <path d="M0.5 0v2.500h10V0M0.5 16v-2.500h10V16M0.5 5h10v6H0.5zM14 0v3M14 9v7M13 4.500h2.500v3H13z" fill="none" stroke="#fff" />
        </svg>
      </button>
      {TASKS.map((task) => (
        <button
          key={task.label}
          type="button"
          aria-label={task.label}
          className={`relative flex w-[49px] items-center justify-center ${task.active ? 'bg-[#3e5156]' : ''}`}
        >
          <svg viewBox="0 0 24 24" className="size-6">
            {task.art}
          </svg>
          {task.running && (
            <span className={`absolute bottom-0 h-[3px] bg-[#eebfd4] ${task.active ? 'inset-x-0' : 'inset-x-1'}`} />
          )}
        </button>
      ))}

      {/* forum stamp, spans the status bar and the tray */}
      <div className="pointer-events-none absolute -top-[22px] right-[5px] h-[57px] w-[206px]">
        <div className="absolute inset-x-0 bottom-0 h-[35px] bg-[#5f6a6c]" />
        <svg viewBox="0 0 60 60" className="absolute top-0 left-0 size-[60px]" aria-hidden="true">
          <ellipse cx="23" cy="17" rx="23" ry="12" transform="rotate(38 23 17)" fill="none" stroke="#8791a3" strokeWidth="3" opacity="0.7" />
          <path d="M43 17c14-2 16 10 8 22S28 60 20 52s0-18 8-24" fill="none" stroke="#963543" strokeWidth="3" opacity="0.85" />
        </svg>
        <span className="absolute top-0 left-[69px] text-[29px] leading-9 font-bold whitespace-nowrap text-[#5fb583]/80">
          野火论坛
        </span>
        <span className="absolute right-1 bottom-0.5 text-base leading-6 whitespace-nowrap text-[#3f6b70]">
          www.proewildfire.cn
        </span>
      </div>

      <div className="relative ml-auto flex items-center pr-6">
        <button type="button" aria-label="显示隐藏的图标" className="mr-2.5 flex">
          <svg viewBox="0 0 12 8" className="h-2 w-3">
            <path d="M0.5 7L6 1.500 11.500 7" fill="none" stroke="#fff" strokeWidth="1.3" />
          </svg>
        </button>
        <button type="button" aria-label="安全卫士" className="mr-2 flex">
          <svg viewBox="0 0 16 16" className="size-4">
            <circle cx="8" cy="8" r="8" fill="#bfd93a" />
            <path d="M8 4v8M4 8h8" stroke="#fff" strokeWidth="2" />
            <path d="M8 8h8v8H8z" fill="#e8a53c" opacity="0.85" />
          </svg>
        </button>
        <button type="button" aria-label="网络" className="mr-2 flex">
          <svg viewBox="0 0 16 16" className="size-4">
            <path d="M5 3.500h10.500v7H5M0.5 2.500h5v4h-5zM3 6.500v8M7 14h6M10 10.500V14" fill="none" stroke="#fff" />
          </svg>
        </button>
        <button type="button" aria-label="音量" className="mr-2.5 flex">
          <svg viewBox="0 0 16 16" className="size-4">
            <path d="M0.5 6h3L7 2.500v11L3.500 10h-3zM9 6c1 1 1 3 0 4M11 4c2 2 2 6 0 8M13 2c3 3 3 9 0 12" fill="none" stroke="#fff" />
          </svg>
        </button>
        <div className="mr-5 text-center text-xs leading-[19px]">
          <p>11:32</p>
          <p>2019/6/17</p>
        </div>
        <button type="button" aria-label="通知" className="flex">
          <svg viewBox="0 0 18 16" className="h-4 w-[18px]">
            <path d="M1 1.500h16v11h-5L9 15.500V12.500H1z" fill="none" stroke="#fff" strokeWidth="1.2" />
          </svg>
        </button>
      </div>
      <span className="absolute inset-y-0 right-1 w-px bg-[#5c6668]" />
    </div>
  )
}

export default function App() {
  return (
    <div className="flex h-screen flex-col overflow-hidden bg-[#eef0f3] font-['Noto_Sans','Noto_Sans_CJK_SC',sans-serif]">
      <TitleBar />
      <TabRow />
      <Ribbon />
      <div className="flex min-h-0 flex-1">
        <ModelTree />
        <Viewport />
      </div>
      <StatusBar />
      <Taskbar />
    </div>
  )
}
